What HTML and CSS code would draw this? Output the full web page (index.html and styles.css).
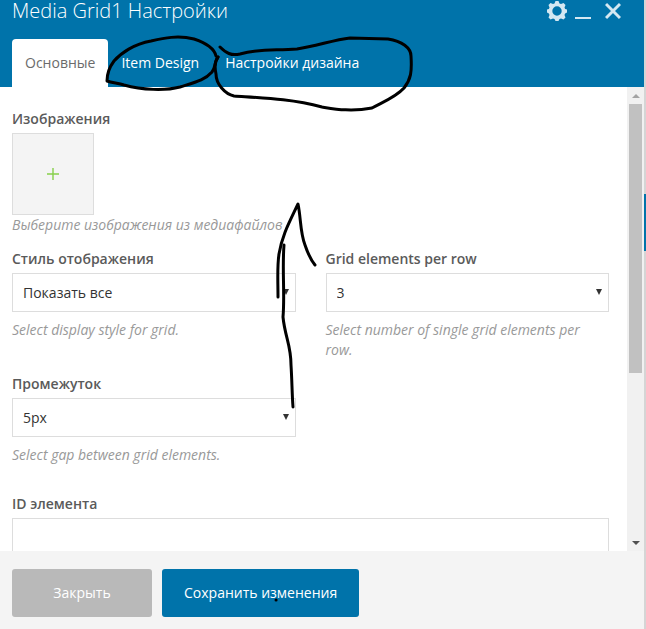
FILE: index.html
```html
<!DOCTYPE html>
<html lang="ru">
	<head>
		<meta charset="UTF-8">
		<title>Media Grid1 Настройки</title>
		<link rel="stylesheet" href="styles.css">
	</head>
	<body>
		<div class="page">
			<div class="panel">
				<header class="header">
					<div class="title-bar">
						<h1 class="title">Media Grid1 Настройки</h1>
						<div class="controls">
							<button type="button" class="control" aria-label="Настройки">
								<svg width="20" height="20" viewBox="0 0 20 20">
									<path fill-rule="evenodd" d="M8.500 0h3l1 2.500 1.500.6 2.500-1 2 2-1 2.500.6 1.400L20 8.500v3l-1.900 1-.6 1.400 1 2.500-2 2-2.500-1-1.500.6-1 2h-3l-1-2-1.500-.6-2.500 1-2-2 1-2.500-.6-1.400L0 11.500v-3l1.900-.5.6-1.400-1-2.500 2-2 2.500 1 1.500-.6zM10 5.300a4.700 4.700 0 1 0 0 9.400a4.700 4.700 0 1 0 0-9.400z"/>
								</svg>
							</button>
							<button type="button" class="control" aria-label="Свернуть">
								<svg width="16" height="20" viewBox="0 0 16 20"><path d="M0 16h16v2H0z"/></svg>
							</button>
							<button type="button" class="control control-close" aria-label="Закрыть окно">
								<svg width="16" height="20" viewBox="0 0 16 20"><path class="line" d="M1 3l14 14M15 3L1 17"/></svg>
							</button>
						</div>
					</div>
					<nav class="tabs">
						<a href="#general" class="tab active">Основные</a>
						<a href="#item-design" class="tab">Item Design</a>
						<a href="#design" class="tab">Настройки дизайна</a>
					</nav>
				</header>

				<main class="main">
					<form class="content" id="general">
						<div class="row">
							<div class="field wide">
								<label class="label" for="images">Изображения</label>
								<button type="button" class="add-image" id="images">
									<svg width="12" height="12" viewBox="0 0 12 12"><path d="M5.300 0h1.400v5.300H12v1.400H6.700V12H5.300V6.700H0V5.300h5.300z"/></svg>
								</button>
								<p class="hint">Выберите изображения из медиафайлов</p>
							</div>
							<div class="field">
								<label class="label" for="display">Стиль отображения</label>
								<div class="select-box">
									<select class="input" id="display"><option>Показать все</option></select>
								</div>
								<p class="hint space">Select display style for grid.</p>
							</div>
							<div class="field">
								<label class="label" for="per-row">Grid elements per row</label>
								<div class="select-box">
									<select class="input" id="per-row"><option>3</option></select>
								</div>
								<p class="hint space">Select number of single grid elements per row.</p>
							</div>
							<div class="field">
								<label class="label" for="gap">Промежуток</label>
								<div class="select-box">
									<select class="input" id="gap"><option>5px</option></select>
								</div>
								<p class="hint space">Select gap between grid elements.</p>
							</div>
						</div>
						<div class="field">
							<label class="label" for="element-id">ID элемента</label>
							<input class="input" type="text" id="element-id">
						</div>
					</form>
					<div class="scrollbar">
						<span class="arrow up"></span>
						<span class="thumb"></span>
						<span class="arrow down"></span>
					</div>
				</main>

				<footer class="footer">
					<button type="button" class="btn btn-close">Закрыть</button>
					<button type="button" class="btn btn-save">Сохранить изменения</button>
				</footer>
			</div>
			<div class="edge"><span class="edge-mark"></span></div>
		</div>

		<!-- pen marks over the panel -->
		<svg class="marks" width="430" height="610" viewBox="0 0 430 610">
			<path d="M216 56C214 47 203 42 194 39C178 35 164 38 151 41C134 44 121 53 114 61C108 69 107 75 107 81C112 83 118 83 124 85C142 90 165 91 180 87C196 82 205 80 212 72C216 67 214 62 218 57"/>
			<path d="M220 47C226 53 231 56 240 54C262 48 276 51 297 49C317 46 333 40 350 38L388 39C402 41 411 48 411 56C412 72 411 79 404 88C396 97 383 102 372 108C351 112 335 109 322 107C292 99 263 98 234 96C225 94 216 84 216 74C214 65 215 61 218 57"/>
			<path d="M278 297C278 280 277 267 279 254C282 236 288 225 298 204C301 218 300 232 305 245C308 254 311 260 315 265"/>
			<path d="M284 245C282 270 285 294 283 317C285 337 291 345 291 365C292 380 292 394 293 407"/>
			<path d="M276 600h.1"/>
		</svg>
	</body>
</html>
```
FILE: styles.css
```css
*{
	box-sizing: border-box;
	margin: 0;
	padding: 0;
}
body{
	font-family: "Open Sans", "Noto Sans", sans-serif;
	font-size: 14px;
	line-height: 20px;
	color: #5a5a5a;
}
button, input, select{
	font: inherit;
}
.page{
	display: flex;
	height: 100vh;
	overflow: hidden;
}
.panel{
	flex: 1;
	min-width: 0;
	display: flex;
	flex-direction: column;
	background-color: #fff;
}

/* header */
.header{
	background-color: #0073aa;
	padding: 0 12px;
}
.title-bar{
	display: flex;
	justify-content: space-between;
	height: 39px;
}
.title{
	font-size: 20px;
	font-weight: 300;
	line-height: 22px;
	color: #fff;
}
.controls{
	display: flex;
	align-items: flex-start;
	gap: 8px;
	padding: 1px 11px 0 0;
}
.control{
	border: 0;
	background: none;
	cursor: pointer;
}
.control svg{
	display: block;
	fill: #d4e8f2;
}
.control .line{
	stroke: #d4e8f2;
	stroke-width: 3;
}
.control-close{
	margin-left: 6px;
}
.tabs{
	display: flex;
}
.tab{
	padding: 14px 13px;
	color: #fff;
	text-decoration: none;
}
.tab.active{
	background-color: #fff;
	color: #6b6b6b;
	border-radius: 4px 4px 0 0;
}

/* form */
.main{
	flex: 1;
	min-height: 0;
	display: flex;
}
.content{
	flex: 1;
	overflow: hidden;
	padding: 22px 18px 0 12px;
}
.row{
	display: grid;
	grid-template-columns: 1fr 1fr;
	gap: 14px 30px;
	margin-bottom: 29px;
}
.wide{
	grid-column: 1 / 3;
}
.label{
	display: block;
	margin-bottom: 4px;
	font-weight: 600;
}
.add-image{
	display: flex;
	align-items: center;
	justify-content: center;
	width: 82px;
	height: 82px;
	border: 1px solid #ddd;
	background-color: #f4f4f4;
	cursor: pointer;
}
.add-image svg{
	fill: #86cf4a;
}
.hint{
	font-style: italic;
	color: #999;
}
.space{
	margin-top: 8px;
}
.select-box{
	position: relative;
}
.select-box::after{
	content: "";
	position: absolute;
	top: 16px;
	right: 7px;
	border: solid transparent;
	border-width: 6px 3px 0;
	border-top-color: #333;
	pointer-events: none;
}
.input{
	display: block;
	width: 100%;
	height: 39px;
	padding: 0 10px;
	border: 1px solid #ddd;
	border-radius: 0;
	background-color: #fff;
	color: #333;
	appearance: none;
}

/* scrollbar */
.scrollbar{
	width: 17px;
	display: flex;
	flex-direction: column;
	align-items: center;
	background-color: #f1f1f1;
}
.arrow{
	width: 17px;
	height: 17px;
	display: flex;
	align-items: center;
	justify-content: center;
}
.arrow::after{
	content: "";
	border: solid transparent;
}
.up::after{
	border-width: 0 4px 4px;
	border-bottom-color: #a3a3a3;
}
.down{
	margin-top: auto;
}
.down::after{
	border-width: 4px 4px 0;
	border-top-color: #505050;
}
.thumb{
	width: 13px;
	height: 58%;
	background-color: #c1c1c1;
}

/* footer */
.footer{
	display: flex;
	gap: 10px;
	padding: 18px 12px 12px;
	background-color: #f4f4f4;
}
.btn{
	height: 48px;
	border: 0;
	border-radius: 3px;
	color: #fff;
	cursor: pointer;
}
.btn-close{
	min-width: 140px;
	background-color: #b9b9b9;
}
.btn-save{
	padding: 0 22px;
	background-color: #0073aa;
}

/* strip of the page behind the panel */
.edge{
	width: 2px;
	background-color: #d5d5d5;
}
.edge-mark{
	display: block;
	height: 57px;
	margin-top: 194px;
	background-color: #0073aa;
}

.marks{
	position: absolute;
	top: 0;
	left: 0;
	fill: none;
	stroke: #000;
	stroke-width: 3;
	stroke-linecap: round;
	stroke-linejoin: round;
	pointer-events: none;
}
```
